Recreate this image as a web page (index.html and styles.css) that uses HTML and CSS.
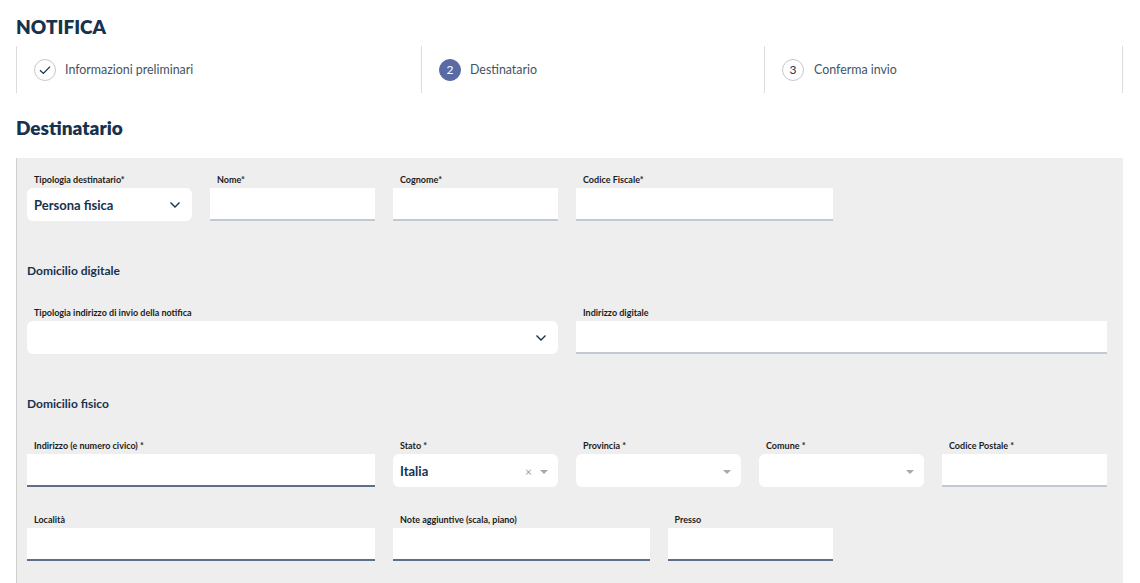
FILE: index.html
```html
<!DOCTYPE html>
<html lang="it">
<head>
  <meta charset="UTF-8" />
  <meta name="viewport" content="width=device-width, initial-scale=1.0"/>
  <title>Notifica - Destinatario</title>
  <link rel="stylesheet" href="styles.css">
</head>
<body>
  <div id="pagina">
    <h1 class="titolo">NOTIFICA</h1>

    <div class="stepper">
      <div class="step step-uno">
        <span class="cerchio fatto">
          <svg width="14" height="14" viewBox="0 0 14 14"><path d="M2 7.2 L5.4 10.4 L12 3.6" fill="none" stroke="#17324d" stroke-width="1.3"/></svg>
        </span>
        <span class="step-testo">Informazioni preliminari</span>
      </div>
      <div class="step step-due">
        <span class="cerchio attivo">2</span>
        <span class="step-testo">Destinatario</span>
      </div>
      <div class="step step-tre">
        <span class="cerchio">3</span>
        <span class="step-testo">Conferma invio</span>
      </div>
    </div>

    <h2 class="sottotitolo">Destinatario</h2>

    <div class="pannello">
      <div class="riga">
        <div class="campo span2">
          <label>Tipologia destinatario*</label>
          <div class="select">
            <span class="valore">Persona fisica</span>
            <svg class="chevron" width="12" height="8" viewBox="0 0 12 8"><path d="M1.5 1.5 L6 6 L10.5 1.5" fill="none" stroke="#17324d" stroke-width="1.4"/></svg>
          </div>
        </div>
        <div class="campo span2">
          <label>Nome*</label>
          <div class="input chiaro"></div>
        </div>
        <div class="campo span2">
          <label>Cognome*</label>
          <div class="input chiaro"></div>
        </div>
        <div class="campo span3">
          <label>Codice Fiscale*</label>
          <div class="input chiaro"></div>
        </div>
      </div>

      <h3 class="sezione">Domicilio digitale</h3>
      <div class="riga">
        <div class="campo span6">
          <label>Tipologia indirizzo di invio della notifica</label>
          <div class="select">
            <span class="valore"></span>
            <svg class="chevron" width="12" height="8" viewBox="0 0 12 8"><path d="M1.5 1.5 L6 6 L10.5 1.5" fill="none" stroke="#17324d" stroke-width="1.4"/></svg>
          </div>
        </div>
        <div class="campo span6">
          <label>Indirizzo digitale</label>
          <div class="input chiaro"></div>
        </div>
      </div>

      <h3 class="sezione">Domicilio fisico</h3>
      <div class="riga">
        <div class="campo span4">
          <label>Indirizzo (e numero civico) *</label>
          <div class="input scuro"></div>
        </div>
        <div class="campo span2">
          <label>Stato *</label>
          <div class="select">
            <span class="valore">Italia</span>
            <span class="azioni"><span class="x">×</span><span class="freccia"></span></span>
          </div>
        </div>
        <div class="campo span2">
          <label>Provincia *</label>
          <div class="select">
            <span class="valore"></span>
            <span class="azioni"><span class="freccia"></span></span>
          </div>
        </div>
        <div class="campo span2">
          <label>Comune *</label>
          <div class="select">
            <span class="valore"></span>
            <span class="azioni"><span class="freccia"></span></span>
          </div>
        </div>
        <div class="campo span2">
          <label>Codice Postale *</label>
          <div class="input chiaro"></div>
        </div>
      </div>

      <div class="riga riga-ultima">
        <div class="campo span4">
          <label>Località</label>
          <div class="input scuro"></div>
        </div>
        <div class="campo span3">
          <label>Note aggiuntive (scala, piano)</label>
          <div class="input scuro"></div>
        </div>
        <div class="campo span2">
          <label>Presso</label>
          <div class="input scuro"></div>
        </div>
      </div>
    </div>
  </div>
</body>
</html>
```

FILE: styles.css
```css
body {
  margin: 0;
  font-family: "Lato", "Noto Sans", sans-serif;
  background: white;
  color: #17324d;
}

#pagina {
  padding: 0 17px 0 16px;
}

.titolo {
  margin: 0;
  padding-top: 16px;
  font-size: 19px;
  line-height: 22px;
  font-weight: 800;
  color: #17324d;
}

/* Stepper oben */
.stepper {
  display: flex;
  margin-top: 8px;
  height: 47px;
}

.step {
  display: flex;
  align-items: center;
  gap: 9px;
  padding-left: 17px;
  border-left: 1px solid #dcdcdc;
}

.step-uno { width: 387px; }
.step-due { width: 325px; }
.step-tre { flex: 1; border-right: 1px solid #dcdcdc; gap: 10px; }

.cerchio {
  width: 20px;
  height: 20px;
  border: 1px solid #c8c8c8;
  border-radius: 50%;
  display: flex;
  align-items: center;
  justify-content: center;
  font-size: 12px;
  color: #17324d;
}

.cerchio.attivo {
  background: #5a6aa5;
  border-color: #5a6aa5;
  color: white;
}

.step-testo {
  font-size: 12.4px;
  color: #3f5468;
}

.sottotitolo {
  margin: 0;
  padding-top: 24px;
  font-size: 19px;
  line-height: 22px;
  font-weight: 800;
  color: #17324d;
}

/* grauer Formularbereich */
.pannello {
  margin-top: 19px;
  background: #eeeeee;
  border-left: 1px solid #cfcfcf;
  padding: 16px 16px 22px 10px;
}

.riga {
  display: grid;
  grid-template-columns: repeat(12, 1fr);
  column-gap: 18px;
}

.span2 { grid-column: span 2; }
.span3 { grid-column: span 3; }
.span4 { grid-column: span 4; }
.span6 { grid-column: span 6; }

.riga-ultima {
  margin-top: 27px;
}

.campo label {
  display: block;
  padding-left: 7px;
  font-size: 9px;
  line-height: 12px;
  font-weight: 700;
  color: #1c1c1c;
  margin-bottom: 2px;
}

.input {
  height: 31px;
  background: white;
  border-bottom: 2px solid #c3c9d1;
}

.input.scuro {
  border-bottom-color: #5e7088;
}

.select {
  height: 33px;
  background: white;
  border-radius: 6px;
  display: flex;
  align-items: center;
  justify-content: space-between;
  padding: 0 10px 0 7px;
  box-sizing: border-box;
}

.valore {
  font-size: 13px;
  font-weight: 700;
  color: #17324d;
}

.chevron {
  margin-right: 1px;
}

.azioni {
  display: flex;
  align-items: center;
  gap: 8px;
  padding-top: 3px;
}

.x {
  font-size: 12px;
  line-height: 12px;
  color: #a0a0a0;
}

.freccia {
  width: 0;
  height: 0;
  border-left: 4px solid transparent;
  border-right: 4px solid transparent;
  border-top: 4px solid #a8a8a8;
}

.sezione {
  margin: 42px 0 28px 0;
  font-size: 12px;
  line-height: 16px;
  font-weight: 700;
  color: #17324d;
}
```
